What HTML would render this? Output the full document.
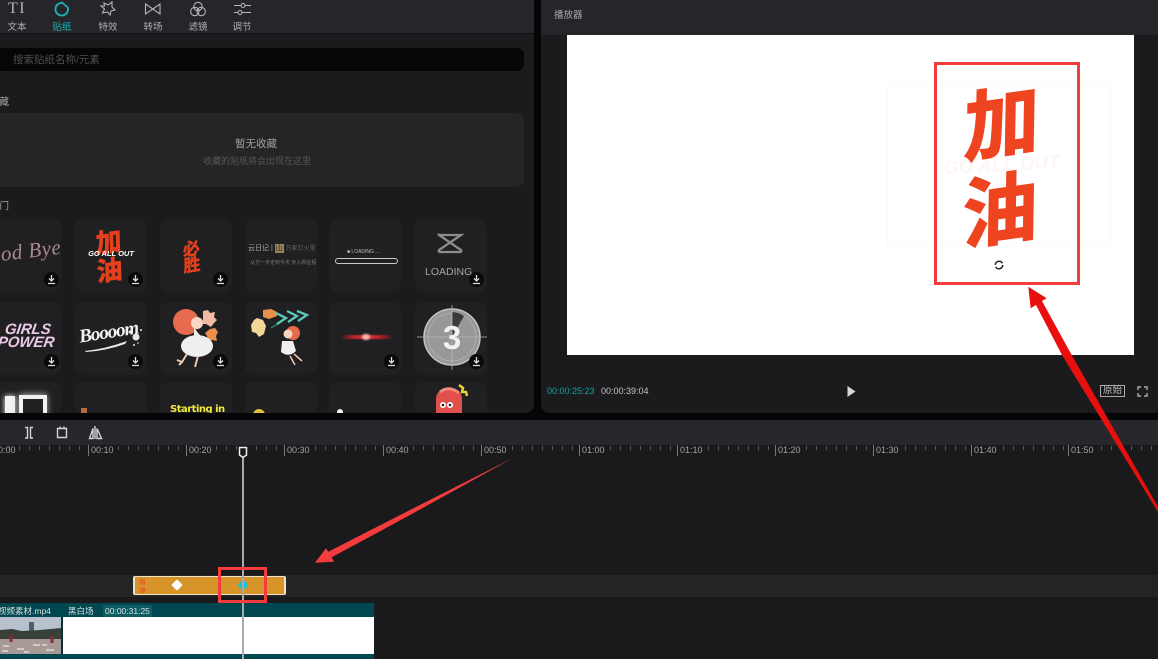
<!DOCTYPE html>
<html lang="zh"><head><meta charset="utf-8"><style>
*{box-sizing:border-box;margin:0;padding:0}
html,body{width:1158px;height:659px;overflow:hidden;background:#050507;font-family:"Liberation Sans","Noto Sans CJK SC",sans-serif}
.a{position:absolute}
#root{position:relative;width:1158px;height:659px;overflow:hidden;filter:blur(.35px)}
.tab{position:absolute;top:22px;width:40px;text-align:center;font-size:9.500px;color:#b0b0b0;line-height:12px}
.card{position:absolute;width:72px;height:73px;background:#202022;border-radius:8px;overflow:hidden}
.dl{position:absolute;width:15px;height:15px;border-radius:50%;background:#0a0a0a}
.dl svg{display:block}
.r{position:absolute;top:445px;font-size:9px;color:#a3a3a3;line-height:11px;border-left:1px solid #777;padding-left:2px;white-space:nowrap}
</style></head><body><div id="root">

<div class="a" style="left:0;top:0;width:534px;height:413px;background:#1b1b1d;border-radius:0 0 8px 0;overflow:hidden">
  <div class="a" style="left:0;top:0;width:534px;height:34px;background:#26262a;border-bottom:1px solid #121214"></div>
  <div class="a" style="left:8px;top:-1px;width:22px;font:16px 'Liberation Serif',serif;color:#b5b5b5;letter-spacing:1.500px;line-height:20px">TI</div>
  <div class="tab" style="left:-3px">文本</div>
  <svg class="a" style="left:52px;top:0" width="20" height="18" fill="none" stroke="#19b5b5" stroke-width="1.800"><path d="M6.500 3.800A6.300 6.300 0 1 0 15.800 7.500L10 2.500 6.500 3.800z"/></svg>
  <div class="tab" style="left:42px;color:#19b5b5">贴纸</div>
  <svg class="a" style="left:98px;top:0" width="20" height="18" fill="none" stroke="#b5b5b5" stroke-width="1.100"><path d="M6 3L10 5 14 2 14 7 17 10 13 11 12 15 9.500 12 4.500 13 6.500 9 3 6 6.500 6z"/></svg>
  <div class="tab" style="left:88px">特效</div>
  <svg class="a" style="left:143px;top:1px" width="20" height="16" fill="none" stroke="#b5b5b5" stroke-width="1.100"><path d="M2.500 3L17 13V3L2.500 13z"/></svg>
  <div class="tab" style="left:133px">转场</div>
  <svg class="a" style="left:188px;top:0" width="20" height="18" fill="none" stroke="#b5b5b5" stroke-width="1.100"><circle cx="10" cy="6.500" r="4.200"/><circle cx="6.800" cy="11.500" r="4.200"/><circle cx="13.200" cy="11.500" r="4.200"/></svg>
  <div class="tab" style="left:178px">滤镜</div>
  <svg class="a" style="left:232px;top:0" width="20" height="18" fill="none" stroke="#b5b5b5" stroke-width="1.100"><path d="M2 5.500H9M13 5.500H19M2 12.500H6M10 12.500H19"/><circle cx="11" cy="5.500" r="2"/><circle cx="8" cy="12.500" r="2"/></svg>
  <div class="tab" style="left:222px">调节</div>

  <div class="a" style="left:-10px;top:48px;width:534px;height:23px;background:#060607;border-radius:7px"></div>
  <div class="a" style="left:13px;top:53px;font-size:10.500px;line-height:14px;color:#505052">搜索贴纸名称/元素</div>
  <div class="a" style="left:-9px;top:96px;font-size:9.500px;line-height:13px;color:#a8a8a8;width:18px;text-align:right">藏</div>
  <div class="a" style="left:-10px;top:113px;width:534px;height:74px;background:#252528;border-radius:8px"></div>
  <div class="a" style="left:216px;top:137px;width:80px;text-align:center;font-size:10.500px;line-height:14px;color:#a0a0a0">暂无收藏</div>
  <div class="a" style="left:186px;top:155px;width:142px;text-align:center;font-size:9px;line-height:13px;color:#555557">收藏的贴纸将会出现在这里</div>
  <div class="a" style="left:-9px;top:200px;font-size:9.500px;line-height:13px;color:#a8a8a8;width:18px;text-align:right">门</div>

  <!-- row 1 -->
  <div class="card" style="left:-11px;top:219px"><div class="a" style="right:0;top:21px;font:italic 21px 'Liberation Serif',serif;color:#a98795;white-space:nowrap;transform:rotate(-7deg);letter-spacing:.5px">Good Bye</div><div class="dl" style="left:55px;top:53px"><svg width="15" height="15" fill="none" stroke="#ddd" stroke-width="1.300"><path d="M7.500 3V9M5 6.500L7.500 9 10 6.500M4 11.500H11"/></svg></div></div>
  <div class="card" style="left:75px;top:219px"><div class="a" style="left:21px;top:8px;width:32px;font:bold 26px/28px 'Noto Sans CJK SC',sans-serif;color:#e5401d;-webkit-text-stroke:.8px #e5401d;transform:rotate(-8deg) skewX(-6deg)">加<br>油</div><div class="a" style="left:0;top:30px;width:72px;text-align:center;font:italic bold 7.500px/9px 'Liberation Sans',sans-serif;color:#fff">GO ALL OUT</div><div class="dl" style="left:53px;top:53px"><svg width="15" height="15" fill="none" stroke="#ddd" stroke-width="1.300"><path d="M7.500 3V9M5 6.500L7.500 9 10 6.500M4 11.500H11"/></svg></div></div>
  <div class="card" style="left:160px;top:219px"><div class="a" style="left:23px;top:20px;width:26px;font:bold 17px/16px 'Noto Sans CJK SC',sans-serif;color:#e5401d;-webkit-text-stroke:.5px #e5401d;transform:rotate(-10deg) skewX(-8deg)">必<br>胜</div><div class="dl" style="left:53px;top:53px"><svg width="15" height="15" fill="none" stroke="#ddd" stroke-width="1.300"><path d="M7.500 3V9M5 6.500L7.500 9 10 6.500M4 11.500H11"/></svg></div></div>
  <div class="card" style="left:245px;top:219px"><div class="a" style="left:3px;top:25px;font-size:7px;line-height:9px;color:#aaa;white-space:nowrap">云日记 | <span style="background:#9a8459;color:#222;padding:1px">山</span> <span style="color:#666;font-size:6px">万家灯火里</span></div><div class="a" style="left:5px;top:41px;font-size:5px;line-height:7px;color:#777;white-space:nowrap">从万一步走到今天 步入新征程一</div></div>
  <div class="card" style="left:329px;top:219px"><div class="a" style="left:18px;top:30px;font-size:5px;line-height:7px;color:#bbb;white-space:nowrap">■ LOADING ...</div><div class="a" style="left:6px;top:39px;width:63px;height:6px;border:1px solid #c8c8c8;border-radius:3px"></div></div>
  <div class="card" style="left:415px;top:219px"><svg class="a" style="left:20px;top:13px" width="30" height="24" fill="none" stroke="#8c8c8c" stroke-width="2.300"><path d="M4 3H26L4 18Q3 20 5 20H25Q27 20 26 18L4 3Q3 2 4 3z"/></svg><div class="a" style="left:10px;top:46px;font-size:10.500px;line-height:14px;color:#a5a5a5">LOADING</div><div class="dl" style="left:54px;top:53px"><svg width="15" height="15" fill="none" stroke="#ddd" stroke-width="1.300"><path d="M7.500 3V9M5 6.500L7.500 9 10 6.500M4 11.500H11"/></svg></div></div>

  <!-- row 2 -->
  <div class="card" style="left:-11px;top:302px"><div class="a" style="left:7px;top:21px;width:62px;text-align:center;font:italic bold 15px/13px 'Liberation Sans',sans-serif;color:#ecc9e8;transform:skewX(-8deg)">GIRLS<br>POWER</div><div class="dl" style="left:55px;top:52px"><svg width="15" height="15" fill="none" stroke="#ddd" stroke-width="1.300"><path d="M7.500 3V9M5 6.500L7.500 9 10 6.500M4 11.500H11"/></svg></div></div>
  <div class="card" style="left:75px;top:302px"><div class="a" style="left:4px;top:20px;font:italic bold 19px/22px 'Liberation Serif',serif;color:#f3f3f3;transform:rotate(-9deg);white-space:nowrap;letter-spacing:-1px">Boooom</div><svg class="a" style="left:0;top:0" width="72" height="60" fill="#e8e8e8"><path d="M10 49Q30 47 52 39L50 42Q30 49 11 50z"/><circle cx="61" cy="35" r="3.500"/><circle cx="55" cy="30" r="1.500"/><circle cx="66" cy="28" r="1"/><circle cx="59" cy="43" r="1"/><circle cx="63" cy="41" r=".8"/></svg><div class="dl" style="left:53px;top:52px"><svg width="15" height="15" fill="none" stroke="#ddd" stroke-width="1.300"><path d="M7.500 3V9M5 6.500L7.500 9 10 6.500M4 11.500H11"/></svg></div></div>
  <div class="card" style="left:160px;top:302px"><svg class="a" style="left:0;top:0" width="72" height="72"><ellipse cx="26" cy="20" rx="13" ry="13" fill="#e66b4f"/><circle cx="37" cy="21" r="6" fill="#f6d7c3"/><path d="M43 9l5-1 2 3 5-1-1 5 3 3-3 3-3 4-5-3-4 0 1-5z" fill="#f4b9a1"/><path d="M50 27l5-1 3 4-2 4 1 5-5-1-4 2-1-6-2-3z" fill="#e8904b"/><path d="M34 26L44 38V46L34 44z" fill="#ececec"/><ellipse cx="37" cy="44" rx="16" ry="11" fill="#efefef"/><path d="M27 52L22 60 17 58M22 60L19 63M38 54L35 65" stroke="#eec8aa" stroke-width="2" fill="none"/></svg><div class="dl" style="left:53px;top:52px"><svg width="15" height="15" fill="none" stroke="#ddd" stroke-width="1.300"><path d="M7.500 3V9M5 6.500L7.500 9 10 6.500M4 11.500H11"/></svg></div></div>
  <div class="card" style="left:245px;top:302px"><svg class="a" style="left:0;top:0" width="72" height="72" fill="none"><path d="M18 8l8-1 6 3 0 4-8 3-6-2z" fill="#e8904b"/><path d="M12 16l6 2 3 6-2 8-5 3-3-4-4-1-1-7 3-5z" fill="#f2d69a"/><path d="M26 26L40 17" stroke="#2f8f86" stroke-width="1.300"/><path d="M31 11l10 5-9 6M42 9l10 5-9 6M52 9l10 4-9 6" stroke="#5bc8bb" stroke-width="2.300"/><circle cx="48" cy="31" r="7" fill="#e66b4f"/><circle cx="43" cy="32" r="4.500" fill="#f6d7c3"/><path d="M37 39L48 39 51 49Q44 56 36 50z" fill="#efefef"/><path d="M45 54L50 63M49 52L57 59" stroke="#eec8aa" stroke-width="1.500"/></svg></div>
  <div class="card" style="left:329px;top:302px"><div class="a" style="left:11px;top:33px;width:53px;height:4px;background:linear-gradient(90deg,transparent,#a51f24 20%,#e83a3a 50%,#a51f24 80%,transparent);filter:blur(.6px)"></div><div class="a" style="left:33px;top:32px;width:8px;height:6px;border-radius:50%;background:#ffb8b8;filter:blur(1px)"></div><div class="dl" style="left:55px;top:52px"><svg width="15" height="15" fill="none" stroke="#ddd" stroke-width="1.300"><path d="M7.500 3V9M5 6.500L7.500 9 10 6.500M4 11.500H11"/></svg></div></div>
  <div class="card" style="left:415px;top:302px"><svg class="a" style="left:0;top:0" width="72" height="72"><circle cx="37" cy="35" r="28" fill="#989898" stroke="#c2c2c2" stroke-width="1.500"/><circle cx="37" cy="35" r="24" fill="none" stroke="#aeaeae" stroke-width="1"/><path d="M37 10V35L49 14A24 24 0 0 0 37 10z" fill="#3a3a3a"/><path d="M37 3V68M2 35H72" stroke="#b8b8b8" stroke-width=".8"/><text x="37" y="47" text-anchor="middle" font-family="Liberation Sans" font-weight="bold" font-size="33" fill="#f2f2f2">3</text></svg><div class="dl" style="left:54px;top:52px"><svg width="15" height="15" fill="none" stroke="#ddd" stroke-width="1.300"><path d="M7.500 3V9M5 6.500L7.500 9 10 6.500M4 11.500H11"/></svg></div></div>

  <!-- row 3 -->
  <div class="card" style="left:-11px;top:382px"><div class="a" style="left:16px;top:14px;width:10px;height:22px;background:#f2f2f2;box-shadow:0 0 6px #fff"></div><div class="a" style="left:30px;top:13px;width:28px;height:24px;border:4px solid #f2f2f2;border-bottom:0;box-shadow:0 -1px 6px #aaa"></div></div>
  <div class="card" style="left:75px;top:382px"><div class="a" style="left:6px;top:26px;width:6px;height:6px;background:#b96a3c"></div></div>
  <div class="card" style="left:160px;top:382px"><div class="a" style="left:10px;top:21px;font:bold 10px/13px 'DejaVu Sans',sans-serif;color:#f1e93c;white-space:nowrap;letter-spacing:-.5px">Starting in</div></div>
  <div class="card" style="left:245px;top:382px"><div class="a" style="left:8px;top:27px;width:12px;height:12px;border-radius:50%;background:#e5c33d"></div></div>
  <div class="card" style="left:329px;top:382px"><div class="a" style="left:8px;top:27px;width:6px;height:6px;border-radius:50%;background:#eee"></div></div>
  <div class="card" style="left:415px;top:382px"><svg class="a" style="left:0;top:0" width="72" height="72"><rect x="21" y="6" width="26" height="60" rx="11" fill="#e2504c"/><path d="M25 10Q34 3 44 11" stroke="#f08a80" stroke-width="3" fill="none"/><circle cx="28" cy="23" r="3" fill="#fff"/><circle cx="35" cy="23" r="3" fill="#fff"/><circle cx="28" cy="23" r="1.300" fill="#222"/><circle cx="35" cy="23" r="1.300" fill="#222"/><path d="M44 3l4 3-1 4 4 0 1 4" stroke="#e8d43b" stroke-width="2.500" fill="none"/></svg></div>
</div>

<!-- player -->
<div class="a" style="left:541px;top:0;width:617px;height:413px;background:#1b1b1d;border-radius:0 0 0 8px">
  <div class="a" style="left:0;top:0;width:617px;height:35px;background:#26262a"></div>
  <div class="a" style="left:13px;top:9px;font-size:9.500px;line-height:13px;color:#a8a8a8">播放器</div>
  <div class="a" style="left:26px;top:35px;width:567px;height:320px;background:#fff"></div>
  <div class="a" style="left:6px;top:385px;font-size:9px;line-height:12px;color:#17a0a0">00:00:25:23</div>
  <div class="a" style="left:60px;top:385px;font-size:9px;line-height:12px;color:#c4c4c4">00:00:39:04</div>
  <svg class="a" style="left:305px;top:385px" width="12" height="13"><path d="M1.500 1L9.500 6.500 1.500 12z" fill="#d9d9d9"/></svg>
  <div class="a" style="left:559px;top:385px;width:25px;height:12px;border:1px solid #aaa;font-size:9.500px;line-height:10px;color:#bbb;text-align:center">原始</div>
  <svg class="a" style="left:596px;top:386px" width="11" height="11" fill="none" stroke="#aaa" stroke-width="1.400"><path d="M1 4V1H4M7 1H10V4M10 7V10H7M4 10H1V7"/></svg>
</div>

<!-- sticker preview -->
<div class="a" style="left:887px;top:83px;width:224px;height:164px;border:1px solid #fafafa"></div>
<div class="a" style="left:942px;top:155px;width:120px;text-align:center;font:italic bold 19px/22px 'Liberation Sans',sans-serif;color:#fdf6f4;white-space:nowrap;transform:rotate(-3deg)">GO ALL OUT</div>
<div class="a" style="left:948px;top:75px;width:106px;font:bold 76px/86px 'Noto Sans CJK SC',sans-serif;color:#ee4420;-webkit-text-stroke:1.500px #ee4420;transform:rotate(-8deg) skewX(-9deg);text-align:center">加<br>油</div>
<svg class="a" style="left:993px;top:259px" width="12" height="12" fill="none" stroke="#222" stroke-width="1.500"><circle cx="6" cy="6" r="3.800" stroke-dasharray="10 2"/></svg>
<div class="a" style="left:934px;top:62px;width:146px;height:223px;border:3px solid #f43c3c"></div>

<!-- timeline -->
<div class="a" style="left:0;top:420px;width:1158px;height:239px;background:#1a1a1c"></div>
<div class="a" style="left:0;top:420px;width:1158px;height:25px;background:#26262b"></div>
<svg class="a" style="left:0;top:420px" width="110" height="25" fill="none" stroke="#d5d5d5" stroke-width="1.400"><path d="M25 7.500H27.500V18H25M33 7.500H30.500V18H33"/><path d="M57.500 8.500H66.500V17.500H57.500zM60 8.500V6.500M64 8.500V6.500"/><path d="M95 6V19M93 8.500L89.500 18.500H93zM97 8.500L101.500 18.500H97z"/></svg>

<svg class="a" style="left:0;top:445px" width="1158" height="14" stroke="#5a5a5c" stroke-width="1"><path d="M9.500 1v4M19.500 1v4M29.500 1v4M39.500 1v4M49.500 1v4M59.500 1v4M69.500 1v4M79.500 1v4M118.500 1v4M128.500 1v4M138.500 1v4M148.500 1v4M158.500 1v4M168.500 1v4M178.500 1v4M216.500 1v4M226.500 1v4M236.500 1v4M256.500 1v4M266.500 1v4M276.500 1v4M315.500 1v4M325.500 1v4M335.500 1v4M345.500 1v4M355.500 1v4M365.500 1v4M375.500 1v4M413.500 1v4M423.500 1v4M433.500 1v4M443.500 1v4M453.500 1v4M463.500 1v4M473.500 1v4M512.500 1v4M522.500 1v4M532.500 1v4M542.500 1v4M552.500 1v4M562.500 1v4M572.500 1v4M610.500 1v4M620.500 1v4M630.500 1v4M640.500 1v4M650.500 1v4M660.500 1v4M670.500 1v4M708.500 1v4M718.500 1v4M728.500 1v4M738.500 1v4M748.500 1v4M758.500 1v4M768.500 1v4M806.500 1v4M816.500 1v4M826.500 1v4M836.500 1v4M846.500 1v4M856.500 1v4M866.500 1v4M905.500 1v4M915.500 1v4M925.500 1v4M935.500 1v4M945.500 1v4M955.500 1v4M965.500 1v4M1003.500 1v4M1013.500 1v4M1023.500 1v4M1033.500 1v4M1043.500 1v4M1053.500 1v4M1063.500 1v4M1101.500 1v4M1111.500 1v4M1121.500 1v4M1131.500 1v4M1141.500 1v4M1151.500 1v4"/></svg>
<div class="r" style="left:-10px">00:00</div><div class="r" style="left:88px">00:10</div><div class="r" style="left:186px">00:20</div><div class="r" style="left:284px">00:30</div><div class="r" style="left:383px">00:40</div><div class="r" style="left:481px">00:50</div><div class="r" style="left:579px">01:00</div><div class="r" style="left:677px">01:10</div><div class="r" style="left:775px">01:20</div><div class="r" style="left:873px">01:30</div><div class="r" style="left:971px">01:40</div><div class="r" style="left:1068px">01:50</div>

<!-- sticker track -->
<div class="a" style="left:0;top:575px;width:1158px;height:22px;background:#242427"></div>
<div class="a" style="left:133px;top:576px;width:153px;height:19px;background:#d79428;border:solid #f0e3c8;border-width:1px 2px;border-radius:2px"></div>
<div class="a" style="left:139px;top:578px;width:9px;font:bold 6.500px/7.500px 'Noto Sans CJK SC',sans-serif;color:#e8582b">加<br>油</div>
<div class="a" style="left:173px;top:581px;width:8px;height:8px;background:#fff;transform:rotate(45deg);border-radius:1px"></div>
<div class="a" style="left:239px;top:581px;width:8px;height:8px;background:#19c5d5;transform:rotate(45deg);border-radius:2px"></div>

<!-- video track -->
<div class="a" style="left:0;top:603px;width:374px;height:56px;background:#00474f"></div>
<div class="a" style="left:-2px;top:605px;font-size:8.500px;line-height:13px;color:#d5e2e2;white-space:nowrap">视频素材.mp4</div>
<div class="a" style="left:68px;top:605px;font-size:8.500px;line-height:13px;color:#d5e2e2">黑白场</div>
<div class="a" style="left:103px;top:605px;padding:0 2px;background:#0e5c63;border-radius:2px;font-size:8.500px;line-height:13px;color:#d5e2e2;white-space:nowrap">00:00:31:25</div>
<svg class="a" style="left:0;top:617px" width="61" height="37"><rect width="61" height="37" fill="#b8c2cc"/><rect x="29" y="5" width="5" height="12" fill="#4c5e70"/><path d="M0 13L12 12 22 14 40 13 61 11V22H0z" fill="#39403a"/><rect y="22" width="61" height="15" fill="#a79a96"/><path d="M11 18v7M52 19v7" stroke="#8f2a33" stroke-width="3"/><path d="M3 29h6M17 32h7M33 28h7M46 33h8M24 35h5M2 34h6M42 28h5" stroke="#ddd" stroke-width="1.500"/></svg>
<div class="a" style="left:61px;top:617px;width:2px;height:37px;background:#0c2f34"></div>
<div class="a" style="left:63px;top:617px;width:311px;height:37px;background:#fff"></div>

<!-- playhead -->
<div class="a" style="left:242px;top:458px;width:2px;height:201px;background:#a9a9ab"></div>
<svg class="a" style="left:238px;top:446px" width="10" height="14"><path d="M1.500 1.500H8.500V9L5 11.500 1.500 9z" fill="#1a1a1c" stroke="#eee" stroke-width="1.500"/></svg>

<!-- annotations -->
<div class="a" style="left:218px;top:567px;width:49px;height:36px;border:3px solid #f43c3c"></div>
<svg class="a" style="left:0;top:0" width="1158" height="659"><path d="M315 562.700L326 548.300 328.300 551.700 410 510 513 458 410 515 331.700 557.300 334 561.700z" fill="#f43c3c"/><path d="M1028.300 286.700L1046.700 298.300 1042 301 1070 352 1158 507V512L1062 355 1036 305 1030.700 308.300z" fill="#ea0f0f"/></svg>
</div></body></html>
